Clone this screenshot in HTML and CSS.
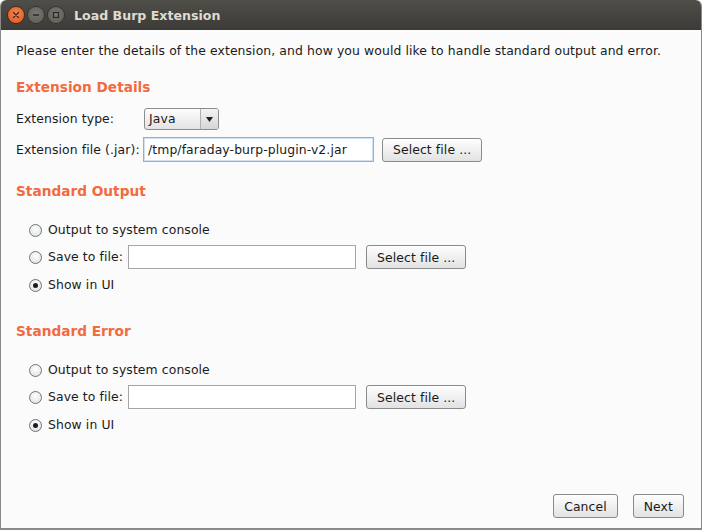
FILE: index.html
```html
<!DOCTYPE html>
<html>
<head>
<meta charset="utf-8">
<link rel="stylesheet" href="styles.css">
</head>
<body>
<div class="window">
  <div class="titlebar">
    <div class="controls">
      <span class="wbtn close"><svg width="8" height="8" viewBox="0 0 8 8"><path d="M1.5 1.5 L6.5 6.5 M6.5 1.5 L1.5 6.5" stroke="#3a2a22" stroke-width="1.3" stroke-linecap="round"/></svg></span>
      <span class="wbtn"><svg width="8" height="8" viewBox="0 0 8 8"><path d="M1 4 H7" stroke="#2b2a27" stroke-width="1.3"/></svg></span>
      <span class="wbtn"><svg width="8" height="8" viewBox="0 0 8 8"><rect x="1.5" y="1.5" width="5" height="5" fill="none" stroke="#2b2a27" stroke-width="1.2"/></svg></span>
    </div>
    <div class="title">Load Burp Extension</div>
  </div>
  <div class="content">
    <p class="intro">Please enter the details of the extension, and how you would like to handle standard output and error.</p>

    <h2 class="heading first">Extension Details</h2>
    <div class="details">
      <span class="label">Extension type:</span>
      <div class="combo"><span class="combo-text">Java</span><span class="combo-arrow"><svg width="7" height="5" viewBox="0 0 7 5"><path d="M0 0 H7 L3.5 5 Z" fill="#222"/></svg></span></div>
      <span></span>
      <span class="label">Extension file (.jar):</span>
      <div class="field focused">/tmp/faraday-burp-plugin-v2.jar</div>
      <button class="btn">Select file ...</button>
    </div>

    <h2 class="heading">Standard Output</h2>
    <div class="radios">
      <div class="radio-row"><span class="radio"></span><span>Output to system console</span></div>
      <div class="radio-row"><span class="radio"></span><span>Save to file:</span><div class="field small"></div><button class="btn">Select file ...</button></div>
      <div class="radio-row"><span class="radio checked"></span><span>Show in UI</span></div>
    </div>

    <h2 class="heading">Standard Error</h2>
    <div class="radios">
      <div class="radio-row"><span class="radio"></span><span>Output to system console</span></div>
      <div class="radio-row"><span class="radio"></span><span>Save to file:</span><div class="field small"></div><button class="btn">Select file ...</button></div>
      <div class="radio-row"><span class="radio checked"></span><span>Show in UI</span></div>
    </div>
  </div>
  <div class="footer">
    <button class="btn">Cancel</button>
    <button class="btn">Next</button>
  </div>
</div>
</body>
</html>
```
FILE: styles.css
```css
html, body {
  margin: 0;
  padding: 0;
  background: #ffffff;
}
body {
  font-family: "DejaVu Sans", sans-serif;
  font-size: 12.4px;
  letter-spacing: 0.1px;
  color: #1a1a1a;
}
.window {
  box-sizing: border-box;
  width: 702px;
  height: 530px;
  display: flex;
  flex-direction: column;
  background: #fbfbfb;
  border-left: 1px solid #8a8a8a;
  border-right: 1px solid #8a8a8a;
  border-bottom: 2px solid #8a8a8a;
  border-radius: 6px 6px 0 0;
  overflow: hidden;
}
.titlebar {
  height: 30px;
  flex: none;
  display: flex;
  align-items: center;
  background: linear-gradient(#4f4e49, #3c3b37);
  margin: 0 -1px;
  border-radius: 6px 6px 0 0;
}
.controls {
  display: flex;
  gap: 4px;
  margin-left: 8px;
}
.wbtn {
  width: 16px;
  height: 16px;
  border-radius: 50%;
  display: flex;
  align-items: center;
  justify-content: center;
  background: radial-gradient(circle at 50% 40%, #7a7873, #5a5954);
  box-shadow: 0 0 0 1px #34332f;
}
.wbtn.close {
  background: radial-gradient(circle at 50% 40%, #f5874f, #e0501e);
  box-shadow: 0 0 0 1px #4a2a1a;
}
.title {
  margin-left: 10px;
  color: #dfdbd2;
  font-weight: bold;
  font-size: 12.6px;
  letter-spacing: 0;
  margin-top: 1px;
}
.content {
  flex: 1;
  padding: 13px 0 0 15px;
}
.intro {
  margin: 0;
  line-height: 16px;
}
.heading {
  margin: 19px 0 0 0;
  font-size: 13.7px;
  letter-spacing: 0;
  line-height: 18px;
  font-weight: bold;
  color: #f26a3f;
}
.heading:not(.first) {
  margin-top: 20px;
}
.radios + .heading {
  margin-top: 26px;
}
.details {
  margin-top: 12px;
  display: grid;
  grid-template-columns: 127px auto auto;
  justify-content: start;
  align-items: center;
  row-gap: 7px;
}
.label {
  line-height: 16px;
}
.combo {
  box-sizing: border-box;
  width: 75px;
  height: 22px;
  margin-left: 1px;
  display: flex;
  border: 1px solid #8c8c8c;
  border-radius: 3px;
  background: linear-gradient(#fdfdfd, #e3e3e3);
}
.combo-text {
  flex: 1;
  padding-left: 4px;
  line-height: 20px;
}
.combo-arrow {
  width: 17px;
  border-left: 1px solid #b0b0b0;
  display: flex;
  align-items: center;
  justify-content: center;
  background: linear-gradient(#f4f4f4, #d6d6d6);
  border-radius: 0 2px 2px 0;
}
.field {
  box-sizing: border-box;
  width: 231px;
  height: 25px;
  background: #ffffff;
  border: 1px solid #a6a6a6;
  padding: 0 4px;
  line-height: 23px;
}
.field.focused {
  border: 1px solid #8fb2d6;
  box-shadow: inset 0 0 0 1px #cfe0f0;
  margin-right: 8px;
}
.field.small {
  width: 228px;
  height: 24px;
  margin-left: 5px;
  margin-right: 10px;
}
.btn {
  box-sizing: border-box;
  height: 24px;
  padding: 0 10px;
  font-family: "DejaVu Sans", sans-serif;
  font-size: 12.4px;
  letter-spacing: 0.1px;
  color: #1a1a1a;
  border: 1px solid #8a8a8a;
  border-radius: 3px;
  background: linear-gradient(#fefefe, #e2e2e2);
  box-shadow: inset 0 1px 0 #ffffff;
}
.radios {
  margin-top: 19px;
  display: flex;
  flex-direction: column;
  gap: 4px;
}
.radio-row {
  display: flex;
  align-items: center;
  min-height: 22px;
  padding-left: 13px;
}
.radio-row:last-child {
  margin-top: 1px;
}
.radio-row > span:nth-child(2) {
  line-height: 16px;
}
.radio {
  box-sizing: border-box;
  width: 13px;
  height: 13px;
  border-radius: 50%;
  border: 1px solid #6e7479;
  background: radial-gradient(circle at 50% 35%, #ffffff, #d9dcdf);
  margin-right: 6px;
  display: flex;
  align-items: center;
  justify-content: center;
}
.radio.checked::after {
  content: "";
  width: 5px;
  height: 5px;
  border-radius: 50%;
  background: #1c1c1c;
}
.footer {
  flex: none;
  display: flex;
  justify-content: flex-end;
  gap: 15px;
  padding: 0 17px 10px 0;
}
```
